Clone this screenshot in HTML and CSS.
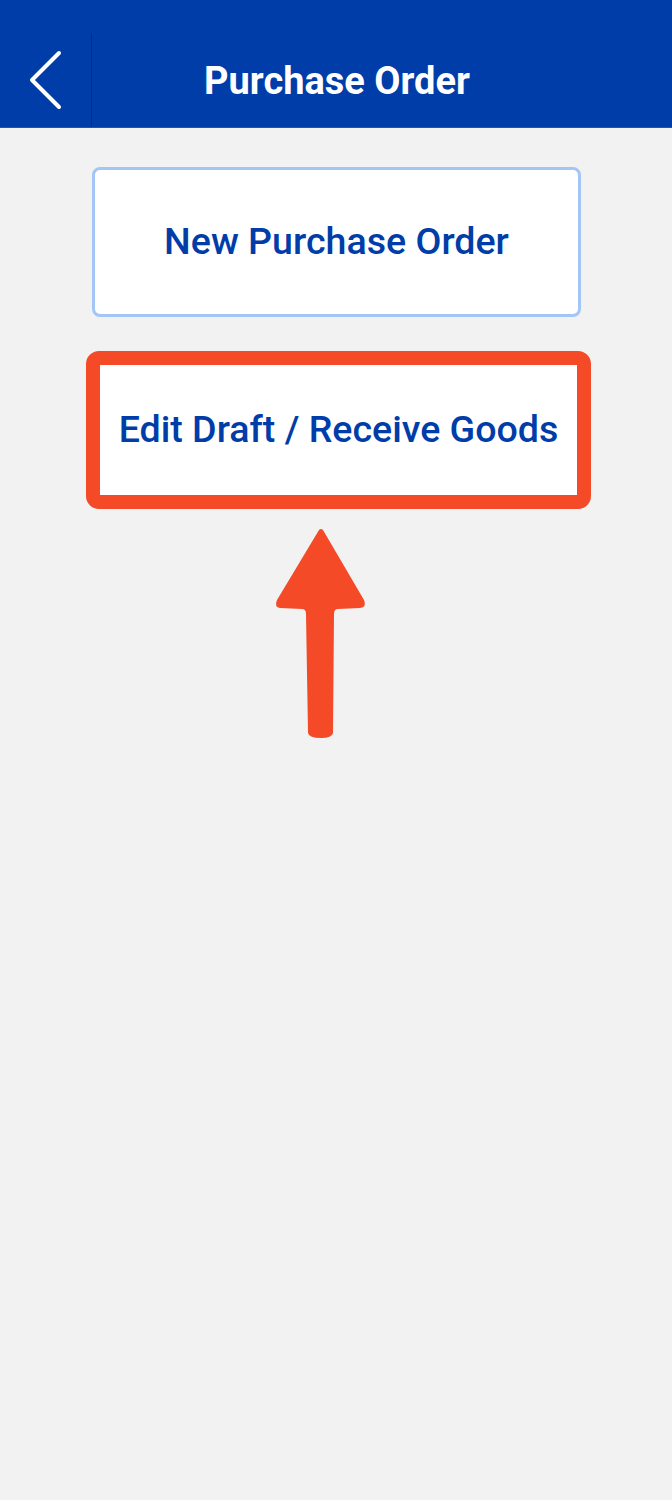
FILE: index.html
```html
<!DOCTYPE html>
<html lang="en">
<head>
    <meta charset="UTF-8">
    <meta name="viewport" content="width=device-width, initial-scale=1.0">
    <title>Purchase Order</title>
    <link rel="stylesheet" href="styles.css">
</head>
<body>

<div class="topbar">
    <div class="back">
        <svg width="36" height="60" viewBox="0 0 36 60">
            <polyline points="31,3 4,30 31,57" fill="none" stroke="#ffffff" stroke-width="4" stroke-linecap="round" stroke-linejoin="round"/>
        </svg>
    </div>
    <h1>Purchase Order</h1>
</div>

<div class="menu">
    <button class="card">New Purchase Order</button>
    <div class="highlight">
        <button class="card flat">Edit Draft / Receive Goods</button>
    </div>

    <svg class="arrow" width="94" height="212" viewBox="0 0 94 212">
        <path d="M45 2 Q47 0 49 2 L90 72 Q93 79 86 80 L64 81 Q60 81 60 86 L59 205 Q58 210 47 210 Q35 210 34 205 L32 86 Q32 81 28 81 L6 80 Q0 79 3 72 Z" fill="#f44a27"/>
    </svg>
</div>

</body>
</html>
```

FILE: styles.css
```css
body {
    margin: 0;
    background-color: #f2f2f2;
    font-family: Roboto, "Noto Sans", sans-serif;
    height: 1500px;
}

.topbar {
    display: flex;
    align-items: flex-end;
    height: 127px;
    background-color: #003da9;
    border-bottom: 1px solid #1a56c0;
    position: relative;
}

.back {
    width: 92px;
    height: 94px;
    border-right: 1px solid #002f86;
    display: flex;
    align-items: center;
    justify-content: center;
    box-sizing: border-box;
}

.topbar h1 {
    position: absolute;
    left: 0;
    right: 0;
    top: 57px;
    margin: 0;
    text-align: center;
    color: #ffffff;
    font-size: 38px;
    font-weight: 700;
    line-height: 48px;
    padding-left: 2px;
}

.menu {
    display: flex;
    flex-direction: column;
    align-items: center;
    padding-top: 39px;
}

.card {
    display: block;
    width: 489px;
    height: 150px;
    background-color: #ffffff;
    border: 3px solid #a3c6f7;
    border-radius: 8px;
    color: #003da9;
    font-family: Roboto, "Noto Sans", sans-serif;
    font-size: 37.6px;
    font-weight: 500;
    margin-left: 1px;
    padding: 0 0 2px 0;
}

.highlight {
    margin-top: 34px;
    border: 14px solid #f44a27;
    border-radius: 13px;
    margin-left: 5px;
}

.card.flat {
    width: 477px;
    height: 130px;
    border: none;
    border-radius: 0;
    margin-left: 0;
}

.arrow {
    margin-top: 19px;
    margin-left: -30px;
}
```
